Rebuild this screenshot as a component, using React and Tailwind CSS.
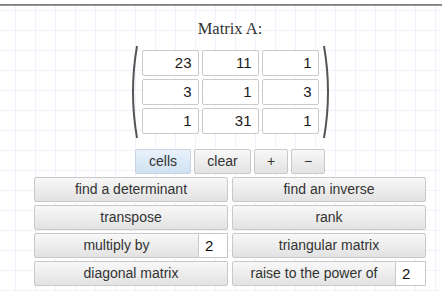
import React from "react";

const sans = "font-['Liberation_Sans',Arial,sans-serif]";
const btn =
  "flex items-center justify-center h-[25px] border border-[#c9c9c9] rounded-[2px] bg-[linear-gradient(#f8f8f8,#e2e2e2)] text-[14px] text-[#333] " +
  sans;

function Paren({ right }) {
  return (
    <svg width="10" height="94" viewBox="0 0 10 94" className="block">
      {right ? (
        <path d="M2 1 Q10 47 2 93" stroke="#555" strokeWidth="2" fill="none" />
      ) : (
        <path d="M8 1 Q0 47 8 93" stroke="#555" strokeWidth="2" fill="none" />
      )}
    </svg>
  );
}

export default function App() {
  const cells = ["23", "11", "1", "3", "1", "3", "1", "31", "1"];
  return (
    <div className="relative w-[442px] h-[291px] overflow-hidden bg-white bg-[linear-gradient(#f1f1fb_1px,transparent_1px),linear-gradient(90deg,#f1f1fb_1px,transparent_1px)] bg-[size:20px_20px] bg-[position:15px_10px]">
      <div className="h-[4px] bg-white" />
      <div className="h-[2px] bg-[linear-gradient(#6f6f6f,#a5a5a5)]" />
      <div className="ml-[34px] w-[392px] flex flex-col items-center">
        <div className="mt-[13px] h-[19px] leading-[19px] text-[16.5px] text-[#333] font-['Liberation_Serif','Times_New_Roman',serif]">
          Matrix A:
        </div>
        <div className="mt-[7px] flex items-center">
          <Paren />
          <div className="ml-[3px] mr-[3px] grid grid-cols-3 gap-[3px]">
            {cells.map((c, i) => (
              <div
                key={i}
                className={
                  "w-[57px] h-[26px] border border-[#cacaca] rounded-[2px] bg-white text-right pr-[6px] text-[15px] leading-[24px] text-[#1a1a1a] " +
                  sans
                }
              >
                {c}
              </div>
            ))}
          </div>
          <Paren right />
        </div>
        <div className="mt-[10px] flex gap-[3px]">
          <div
            className={
              "flex items-center justify-center h-[25px] w-[56px] border border-[#c7d3df] rounded-[2px] bg-[linear-gradient(#e9f2fb,#cfe1f2)] text-[14px] text-[#333] " +
              sans
            }
          >
            cells
          </div>
          <div className={btn + " w-[57px]"}>clear</div>
          <div className={btn + " w-[34px]"}>+</div>
          <div className={btn + " w-[34px]"}>−</div>
        </div>
        <div className="mt-[3px] w-[392px] grid grid-cols-2 gap-x-[4px] gap-y-[3px]">
          <div className={btn}>find a determinant</div>
          <div className={btn}>find an inverse</div>
          <div className={btn}>transpose</div>
          <div className={btn}>rank</div>
          <div className="flex">
            <div className={btn + " flex-1 rounded-r-none"}>multiply by</div>
            <div
              className={
                "w-[29px] h-[25px] border border-l-0 border-[#c9c9c9] bg-white text-[15px] leading-[23px] pl-[6px] text-[#111] " +
                sans
              }
            >
              2
            </div>
          </div>
          <div className={btn}>triangular matrix</div>
          <div className={btn}>diagonal matrix</div>
          <div className="flex">
            <div className={btn + " flex-1 rounded-r-none"}>raise to the power of</div>
            <div
              className={
                "w-[30px] h-[25px] border border-l-0 border-[#c9c9c9] bg-white text-[15px] leading-[23px] pl-[6px] text-[#111] " +
                sans
              }
            >
              2
            </div>
          </div>
        </div>
      </div>
    </div>
  );
}
